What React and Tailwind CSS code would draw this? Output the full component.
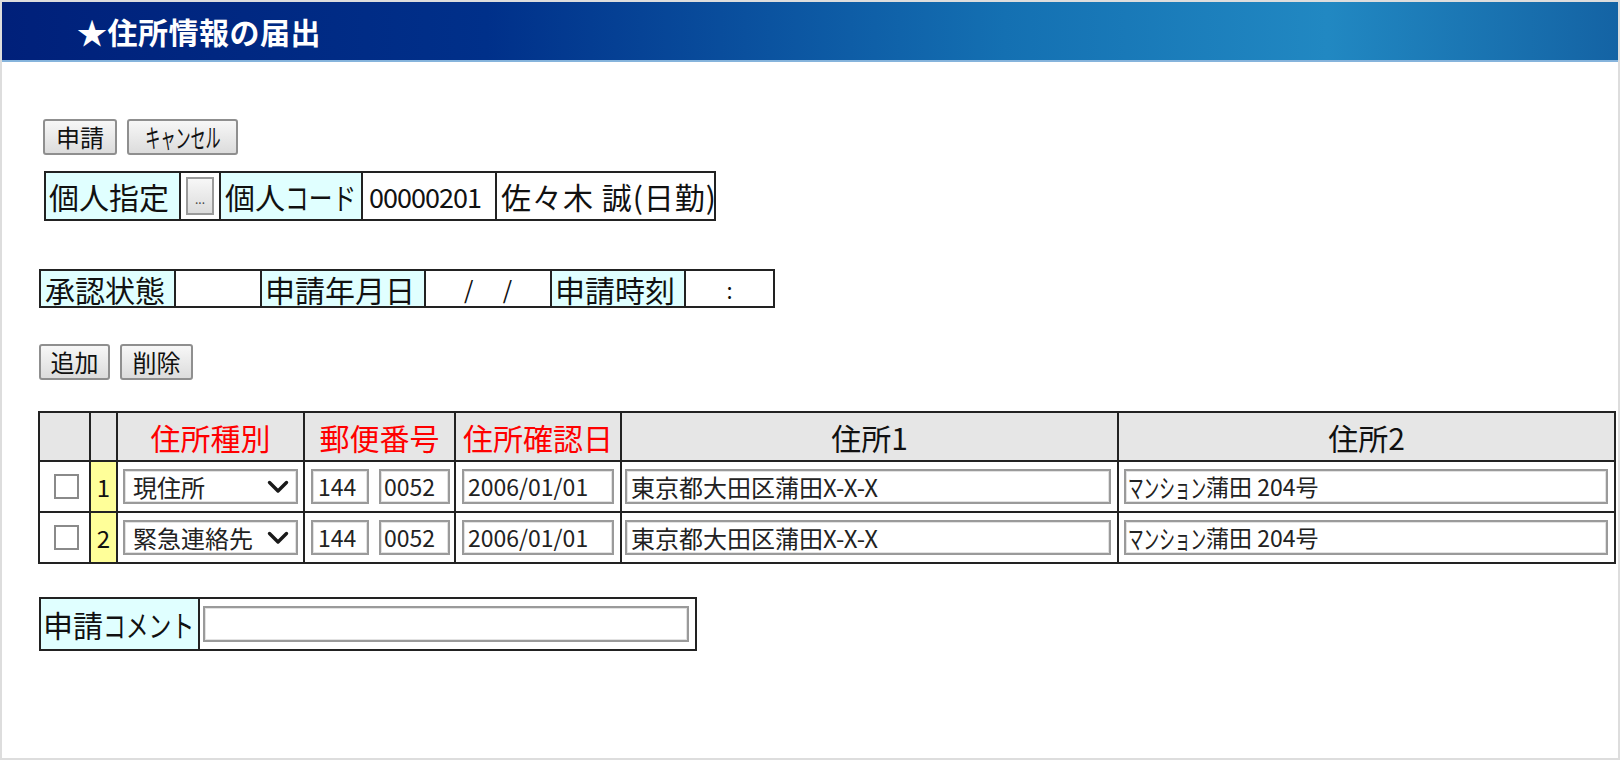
import React from "react";

function Btn({ w, children }) {
  return (
    <div
      className={`h-[36px] ${w} shrink-0 flex items-center justify-center border-2 border-[#8f8f8f] rounded-[3px] bg-[linear-gradient(#f7f7f7,#dcdcdc)] text-[24px] leading-none text-[#111] whitespace-nowrap`}
    >
      {children}
    </div>
  );
}

function TextBox({ w, children, pad = "px-[5px]" }) {
  return (
    <div
      className={`h-[35px] ${w} ${pad} shrink-0 flex items-center border-2 border-[#9a9a9a] shadow-[inset_0_0_0_1px_#e2e2e2] bg-white text-[23px] leading-none text-[#222] whitespace-nowrap overflow-hidden`}
    >
      {children}
    </div>
  );
}

function SelectBox({ children }) {
  return (
    <div className="h-[35px] w-[175px] shrink-0 pl-[8px] pr-[7px] flex items-center justify-between border-2 border-[#9a9a9a] shadow-[inset_0_0_0_1px_#e2e2e2] bg-white text-[24px] leading-none text-[#222] whitespace-nowrap">
      <span>{children}</span>
      <svg width="22" height="14" viewBox="0 0 22 14" className="shrink-0">
        <path d="M2.5 2.5 L11 11 L19.5 2.5" fill="none" stroke="#1a1a1a" strokeWidth="3.4" strokeLinecap="round" strokeLinejoin="round" />
      </svg>
    </div>
  );
}

function Row({ n, kind }) {
  return (
    <div className="flex h-[51px] border-t-2 border-[#222]">
      <div className="w-[49px] shrink-0 flex items-center pl-[14px]">
        <div className="w-[25px] h-[25px] border-2 border-[#8a8a8a] bg-white" />
      </div>
      <div className="w-[27px] shrink-0 border-l-2 border-[#222] bg-[#ffff99] flex items-center justify-center text-[24px] leading-none text-[#111]">
        {n}
      </div>
      <div className="w-[187px] shrink-0 border-l-2 border-[#222] flex items-center pl-[5px]">
        <SelectBox>{kind}</SelectBox>
      </div>
      <div className="w-[151px] shrink-0 border-l-2 border-[#222] flex items-center pl-[6px] gap-[10px]">
        <TextBox w="w-[58px]">144</TextBox>
        <TextBox w="w-[71px]" pad="px-[3px]">0052</TextBox>
      </div>
      <div className="w-[166px] shrink-0 border-l-2 border-[#222] flex items-center pl-[6px]">
        <TextBox w="w-[152px]" pad="px-[4px]">2006/01/01</TextBox>
      </div>
      <div className="w-[497px] shrink-0 border-l-2 border-[#222] flex items-center pl-[3px]">
        <TextBox w="w-[486px]" pad="px-[4px]">
          <span className="text-[24px]">東京都大田区蒲田X-X-X</span>
        </TextBox>
      </div>
      <div className="w-[497px] shrink-0 border-l-2 border-[#222] flex items-center pl-[5px]">
        <TextBox w="w-[484px]" pad="px-[2px]">
          <span className="inline-block scale-x-[0.6] origin-left mr-[-52px] text-[26px]">マンション</span>
          <span>蒲田 204号</span>
        </TextBox>
      </div>
    </div>
  );
}

export default function App() {
  return (
    <div className="w-[1620px] h-[760px] border-2 border-[#dddddd] bg-white overflow-hidden font-['Noto_Sans_CJK_JP',sans-serif] text-[#111]">
      <div className="h-[60px] border-b-2 border-[#86b4dc] bg-[linear-gradient(90deg,#00207a_0%,#00308a_30%,#1470b2_62%,#2188c2_82%,#1463a4_100%)] flex items-center pl-[75px]">
        <span className="text-white font-bold text-[30px] leading-none tracking-[0.5px]">★住所情報の届出</span>
      </div>

      <div className="pl-[36px] flex flex-col items-start">
        <div className="mt-[57px] ml-[5px] flex gap-[10px]">
          <Btn w="w-[74px]">申請</Btn>
          <Btn w="w-[111px]">
            <span className="inline-block scale-x-[0.58] text-[26px]">キャンセル</span>
          </Btn>
        </div>

        <div className="mt-[16px] ml-[6px] flex h-[50px] w-[672px] border-2 border-[#222] text-[30px] leading-none whitespace-nowrap">
          <div className="w-[133px] shrink-0 bg-[#e0ffff] flex items-center px-[3px]">個人指定</div>
          <div className="w-[40px] shrink-0 border-l-2 border-[#222] flex items-center justify-center">
            <div className="w-[28px] h-[38px] border-2 border-[#9a9a9a] bg-[linear-gradient(#f7f7f7,#dcdcdc)] flex items-end justify-center pb-[8px] text-[12px] leading-none text-[#444]">
              ...
            </div>
          </div>
          <div className="w-[142px] shrink-0 border-l-2 border-[#222] bg-[#e0ffff] flex items-center pl-[4px] overflow-hidden">
            <span>個人</span>
            <span className="inline-block scale-x-[0.79] origin-left">コード</span>
          </div>
          <div className="w-[134px] shrink-0 border-l-2 border-[#222] flex items-center pl-[6px] text-[27px] tracking-[-1px]">00000201</div>
          <div className="flex-1 border-l-2 border-[#222] flex items-center px-[4px] tracking-[1px]">佐々木 誠(日勤)</div>
        </div>

        <div className="mt-[48px] ml-[1px] flex h-[39px] w-[736px] border-2 border-[#222] text-[30px] leading-none whitespace-nowrap">
          <div className="w-[133px] shrink-0 bg-[#e0ffff] flex items-center px-[4px]">承認状態</div>
          <div className="w-[86px] shrink-0 border-l-2 border-[#222]" />
          <div className="w-[164px] shrink-0 border-l-2 border-[#222] bg-[#e0ffff] flex items-center px-[3px]">申請年月日</div>
          <div className="w-[126px] shrink-0 border-l-2 border-[#222] flex items-center justify-center text-[24px]">/　 /</div>
          <div className="w-[134px] shrink-0 border-l-2 border-[#222] bg-[#e0ffff] flex items-center px-[3px]">申請時刻</div>
          <div className="flex-1 border-l-2 border-[#222] flex items-center justify-center text-[22px]">:</div>
        </div>

        <div className="mt-[36px] ml-[1px] flex gap-[10px]">
          <Btn w="w-[71px]">追加</Btn>
          <Btn w="w-[73px]">削除</Btn>
        </div>

        <div className="mt-[31px] w-[1578px] border-2 border-[#222]">
          <div className="flex h-[47px] bg-[#e6e6e6] text-[30px] leading-none whitespace-nowrap">
            <div className="w-[49px] shrink-0" />
            <div className="w-[27px] shrink-0 border-l-2 border-[#222]" />
            <div className="w-[187px] shrink-0 border-l-2 border-[#222] flex items-center justify-center text-[#ff0000]">住所種別</div>
            <div className="w-[151px] shrink-0 border-l-2 border-[#222] flex items-center justify-center text-[#ff0000]">郵便番号</div>
            <div className="w-[166px] shrink-0 border-l-2 border-[#222] flex items-center justify-center text-[#ff0000]">住所確認日</div>
            <div className="w-[497px] shrink-0 border-l-2 border-[#222] flex items-center justify-center">住所1</div>
            <div className="w-[497px] shrink-0 border-l-2 border-[#222] flex items-center justify-center">住所2</div>
          </div>
          <Row n="1" kind="現住所" />
          <Row n="2" kind="緊急連絡先" />
        </div>

        <div className="mt-[33px] ml-[1px] flex h-[54px] w-[658px] border-2 border-[#222] whitespace-nowrap">
          <div className="w-[157px] shrink-0 bg-[#e0ffff] flex items-center pl-[2px] text-[30px] leading-none overflow-hidden">
            <span>申請</span>
            <span className="inline-block scale-x-[0.76] origin-left">コメント</span>
          </div>
          <div className="flex-1 border-l-2 border-[#222] flex items-center pl-[3px]">
            <div className="h-[36px] w-[486px] border-2 border-[#9a9a9a] shadow-[inset_0_0_0_1px_#e2e2e2] bg-white" />
          </div>
        </div>
      </div>
    </div>
  );
}
